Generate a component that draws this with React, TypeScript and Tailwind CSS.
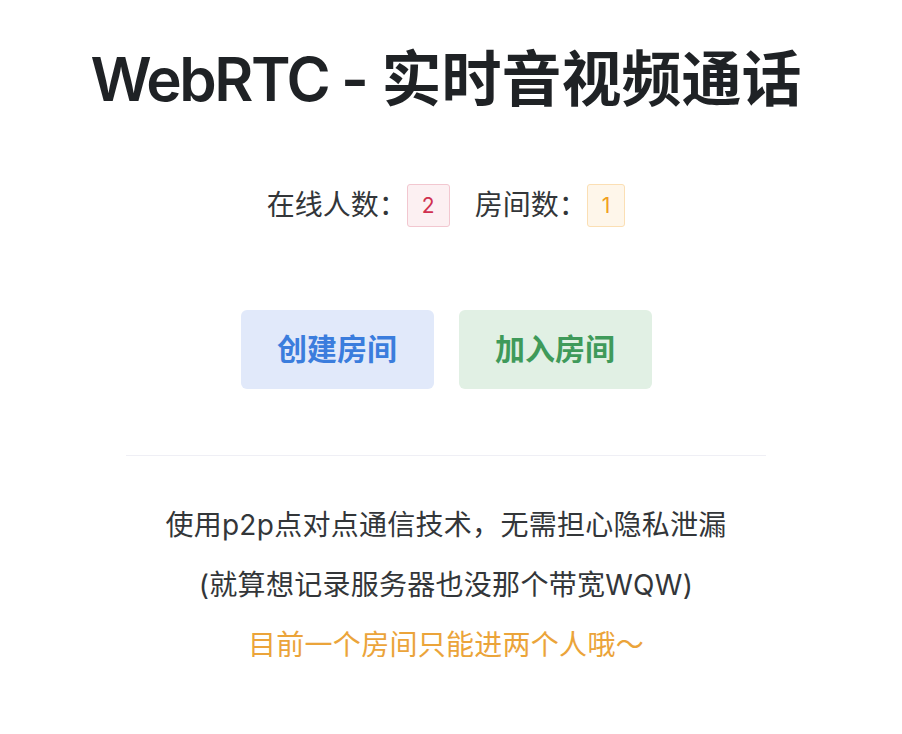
import React from "react";

export default function App() {
  const font = { fontFamily: '"Inter", "Noto Sans CJK SC", sans-serif' };
  return (
    <div className="w-[892px] flex flex-col items-center bg-white text-[#333639]" style={font}>
      <h1 className="mt-[43px] text-[60px] leading-[72px] font-semibold text-[#1f2225] whitespace-nowrap">
        <span className="tracking-[-0.04em]">WebRTC -</span> 实时音视频通话
      </h1>

      <div className="mt-[69px] flex items-center h-[43px] text-[28px] leading-[43px]">
        <span>在线人数：</span>
        <span className="h-[43px] px-[14px] flex items-center justify-center rounded-[3px] border border-[#f2c7d0] bg-[#fcf0f2] text-[21px] text-[#d03050]">
          2
        </span>
        <span className="ml-[25px]">房间数：</span>
        <span className="h-[43px] px-[14px] flex items-center justify-center rounded-[3px] border border-[#fbdfb4] bg-[#fef6ea] text-[21px] text-[#f0a020]">
          1
        </span>
      </div>

      <div className="mt-[83px] flex gap-[25px]">
        <button className="w-[193px] h-[79px] rounded-[6px] bg-[#e1e9fa] text-[#3b7ddd] text-[30px] font-semibold">
          创建房间
        </button>
        <button className="w-[193px] h-[79px] rounded-[6px] bg-[#e1f0e4] text-[#3f9a5a] text-[30px] font-semibold">
          加入房间
        </button>
      </div>

      <div className="mt-[66px] w-[640px] h-px bg-[#efeff5]" />

      <p className="mt-[49px] text-[28px] leading-[40px] tracking-[0.01em]">使用p2p点对点通信技术，无需担心隐私泄漏</p>
      <p className="mt-[20px] text-[28px] leading-[40px] tracking-[0.01em]">(就算想记录服务器也没那个带宽WQW)</p>
      <p className="mt-[20px] text-[28px] leading-[40px] tracking-[0.01em] text-[#eba43a]">目前一个房间只能进两个人哦～</p>
    </div>
  );
}
